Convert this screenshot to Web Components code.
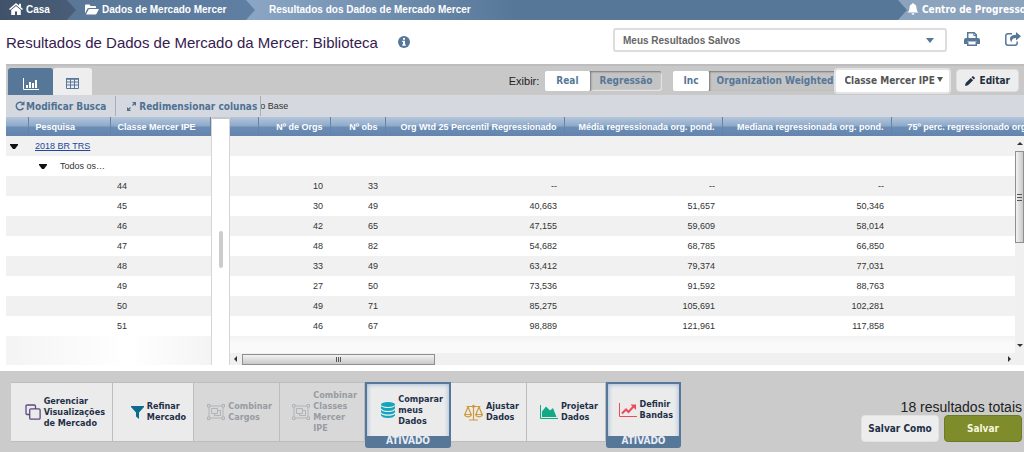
<!DOCTYPE html>
<html lang="pt-BR">
<head>
<meta charset="utf-8">
<title>Resultados de Dados de Mercado</title>
<style>
  html { height: 100%; }
  body {
    margin: 0; min-height: 100%; background: #fff; color: #222; overflow: hidden;
    font-family: "Liberation Sans", Arial, sans-serif; font-size: 9px;
    --blue: #577799; --navy: #1f3048; --grey: #cbcbcb;
    --ui: "DejaVu Sans Condensed", "DejaVu Sans", Verdana, sans-serif;
  }
</style>
</head>
<body>
<market-app></market-app>

<script>
const ICONS = {
  home: ['0 0 14 12', '<path fill="currentColor" d="M7 0 0 6l1 1 6-5 6 5 1-1-2-1.800V.8h-2v1.700zM7 3 2.200 7v5H6V8.500h2V12h3.800V7z"/>'],
  folder: ['0 0 14 11', '<path fill="currentColor" d="M0 9.500V1.500Q0 .5 1 .5h3.500l1 1.500H10q1 0 1 1V4H4Q2.800 4 2.200 5zM1 10.500 3.300 6Q3.700 5 4.800 5H14l-2.300 4.500q-.4 1-1.500 1z"/>'],
  bell: ['0 0 12 12', '<path fill="currentColor" d="M6 0q.8 0 .8.900Q9.500 1.500 9.500 5q0 3 2 4.500H.5q2-1.500 2-4.500 0-3.500 2.700-4.100Q5.200 0 6 0zM4.500 10.200h3Q7.300 11.800 6 11.800T4.500 10.200z"/>'],
  info: ['0 0 12 12', '<circle cx="6" cy="6" r="6" fill="currentColor"/><path fill="#fff" d="M5 2h2v1.800H5zM4.200 4.700H7V8.500h.9v1.200H4.200V8.500H5V5.900h-.8z"/>'],
  print: ['0 0 16 14', '<path fill="none" stroke="currentColor" stroke-width="1.500" d="M3.700 7V.8h6.500l2.100 2V7M3.700 10v3.200h8.600V10"/><path fill="none" stroke="currentColor" stroke-width="1" d="M9.800 1v2.500h2.500"/><path fill="currentColor" d="M2 6h12q2 0 2 2v4h-3.500V9.500h-9V12H0V8q0-2 2-2z"/>'],
  share: ['0 0 16 14', '<path fill="none" stroke="currentColor" stroke-width="1.500" d="M7 1.800H3Q.8 1.800.8 4v7Q.8 13.200 3 13.200h7q2.200 0 2.200-2.200V9.500"/><path fill="currentColor" d="M11 0l5 4.200-5 4.200V6Q6.500 5.800 6.500 10.500 4 7.500 5.500 4.800 7 2.700 11 2.700z"/>'],
  bars: ['0 0 16 12', '<path fill="none" stroke="currentColor" d="M.5 0v11.500H16"/><path fill="currentColor" d="M3 7h2v3H3zM6 4h2v6H6zM9 5h2v5H9zM12 2h2v8h-2z"/>'],
  table: ['0 0 13 11', '<path fill="none" stroke="currentColor" d="M.5 1h12v9.500H.5zM.5 4h12M.5 7h12M4.500 1v9.500M8.500 1v9.500"/><path fill="currentColor" d="M0 0h13v1.500H0z"/>'],
  redo: ['0 0 10 10', '<path fill="none" stroke="currentColor" stroke-width="1.500" d="M8.300 7A3.800 3.800 0 1 1 7.800 2.400"/><path fill="currentColor" d="M9.500 0v4.300H5.300z"/>'],
  expand: ['0 0 9 9', '<path stroke="currentColor" stroke-width="1.300" d="M1.500 7.500l2-2M5.500 3.500l2-2"/><path fill="currentColor" d="M5 0h4v4zM0 5v4h4z"/>'],
  pencil: ['0 0 10 10', '<path fill="currentColor" d="M0 10l.7-3L5.800 1.900l2.300 2.300L3 9.300zM6.500 1.200 7.300.4q.6-.6 1.200 0l1.100 1.100q.6.600 0 1.200l-.8.800z"/>'],
  caret: ['0 0 8 5', '<path fill="currentColor" d="M0 0h8L4 5z"/>'],
  drop: ['0 0 6 5', '<path fill="currentColor" d="M0 0h6L3 5z"/>'],
  node: ['0 0 8 5', '<path fill="currentColor" d="M0 0h8v1L5 5H3L0 1z"/>'],
  copy: ['0 0 16 16', '<path fill="none" stroke="#5b4a80" stroke-width="1.300" d="M4.700 10.500H2.200Q1 10.500 1 9.300V2.200Q1 1 2.200 1h7.100q1.200 0 1.200 1.200v2.500M5.900 4.900h8q1.200 0 1.200 1.200v7.800q0 1.200-1.200 1.200h-8q-1.200 0-1.200-1.200V6.100q0-1.200 1.200-1.200z"/>'],
  funnel: ['0 0 13 13', '<path fill="#0b6c92" d="M0 0h13v1L8 6.500V13L5 10.500v-4L0 1z"/>'],
  group: ['0 0 18 16', '<g fill="none" stroke="#b0b4b8"><path d="M2 2h14v12H2z"/><path fill="#d8d8d8" d="M.5.5h2.500v2.500H.5zM15 .5h2.500v2.500H15zM.5 13h2.500v2.500H.5zM15 13h2.500v2.500H15z"/><path d="M4.500 4.500h6v5h-6z"/><path d="M10.500 6.500h3v5h-6v-2"/></g>'],
  db: ['0 0 14 16', '<g fill="#12a5bd"><ellipse cx="7" cy="2.500" rx="7" ry="2.500"/><path d="M0 4q2 2 7 2t7-2v2.500Q12 9 7 9T0 6.500zM0 8q2 2 7 2t7-2v2.300q-2 2.200-7 2.200t-7-2.200zM0 11.800q2 2 7 2t7-2v1.700Q12 16 7 16T0 13.500z"/></g>'],
  scale: ['0 0 19 17', '<g fill="none" stroke="#cf9a3c" stroke-width="1.200"><path d="M9.500 1v14.500M5 16h9M2.500 2.500h14M4 3 .8 10.500M4 3l3.200 7.500M15 3l-3.200 7.500M15 3l3.200 7.500M.6 10.500h6.800q-.4 2.300-3.400 2.300T.6 10.500zM11.600 10.500h6.800q-.4 2.300-3.400 2.300t-3.400-2.300z"/></g><circle cx="9.500" cy="2.300" r="1.600" fill="#cf9a3c"/>'],
  area: ['0 0 18 14', '<path fill="none" stroke="#12aa85" d="M.5 0v13.500H18"/><path fill="#12aa85" d="M2 12V6.500L6 1.500l4 4L13 3l3.500 9z"/>'],
  line: ['0 0 18 14', '<path fill="none" stroke="#ee4b58" d="M.5 0v13.500H18"/><path fill="none" stroke="#ee4b58" stroke-width="2" d="M3 10.500l4-4 2.500 2.500 5-5.500"/><path fill="#ee4b58" d="M11.500 1.500H17V7z"/>']
};

const define = (name, html, setup) => {
  const tpl = document.createElement('template');
  tpl.innerHTML = html;
  customElements.define(name, class extends HTMLElement {
    constructor() {
      super();
      this.attachShadow({ mode: 'open' }).append(tpl.content.cloneNode(true));
    }
    connectedCallback() { if (setup) setup(this, this.shadowRoot); }
  });
};

/* Icon: its box is the size of its view box */
define('ui-icon', `<style>:host{display:block;flex:none} svg{display:block}</style>`, (el, root) => {
  const [box, body] = ICONS[el.getAttribute('name')];
  const [, , w, h] = box.split(' ');
  root.innerHTML += `<svg viewBox="${box}" width="${w}" height="${h}" aria-hidden="true">${body}</svg>`;
});

/* Breadcrumb */
define('crumb-item', `
<style>
  :host { display: block; height: 20px; background: var(--edge); }
  a { display: flex; align-items: center; gap: 3px; height: 100%; box-sizing: border-box; padding: 0 20px 2px 9px;
      color: #fff; font-weight: bold; font-size: 10px; text-decoration: none; white-space: nowrap;
      background: var(--fill); clip-path: polygon(0 0, calc(100% - 9px) 0, 100% 50%, calc(100% - 9px) 100%, 0 100%); }
  :host([last]) { flex: 1; }
  :host([last]) a { padding-left: 14px; }
</style>
<a href="#"><slot></slot></a>`);

define('crumb-bar', `
<style>
  :host { display: block; }
  nav { display: flex; height: 20px; overflow: hidden; background: #8ba3bd; }
  crumb-item:nth-of-type(1) { --fill: linear-gradient(90deg, #3f5269, #4a5e79); --edge: #5a7797; width: 76px; }
  crumb-item:nth-of-type(2) { --fill: linear-gradient(90deg, #5a7797, #5f7fa3); --edge: #8aa5c4; width: 179px; }
  crumb-item:nth-of-type(3) { --fill: linear-gradient(90deg, #8aa5c4, #577799 40%); --edge: #8ba3bd; }
  .alerts { display: flex; align-items: center; gap: 3px; width: 117px; padding-bottom: 2px; color: #fff; text-decoration: none;
            font: bold 10px var(--ui); white-space: nowrap; }
</style>
<nav aria-label="Trilha">
  <crumb-item><ui-icon name="home"></ui-icon>Casa</crumb-item>
  <crumb-item><ui-icon name="folder"></ui-icon>Dados de Mercado Mercer</crumb-item>
  <crumb-item last>Resultados dos Dados de Mercado Mercer</crumb-item>
  <a class="alerts" href="#"><ui-icon name="bell"></ui-icon>Centro de Progresso</a>
</nav>`);

/* Page title, saved results and page actions */
define('title-bar', `
<style>
  :host { display: flex; align-items: center; height: 44px; padding: 0 3px 0 6px; }
  h1 { margin: 0 20px 0 0; font-size: 15px; font-weight: normal; color: #35204f; white-space: nowrap; }
  .info { color: var(--blue); }
  .pick { display: grid; align-items: center; width: 334px; margin: 0 17px 4px auto; color: var(--blue); }
  .pick > * { grid-area: 1 / 1; }
  select { appearance: none; width: 100%; height: 24px; border: 2px solid #ddd; border-radius: 3px; background: #fff;
           padding: 0 8px; color: #666; font: bold 10px "Liberation Sans", sans-serif; box-sizing: border-box; }
  .pick ui-icon { justify-self: end; margin-right: 13px; pointer-events: none; }
  button { border: 0; padding: 0; margin-bottom: 6px; background: none; color: var(--blue); }
  button + button { margin-left: 25px; }
</style>
<h1>Resultados de Dados de Mercado da Mercer: Biblioteca</h1>
<ui-icon class="info" name="info"></ui-icon>
<div class="pick">
  <select aria-label="Resultados salvos"><option>Meus Resultados Salvos</option></select>
  <ui-icon name="caret"></ui-icon>
</div>
<button aria-label="Imprimir"><ui-icon name="print"></ui-icon></button>
<button aria-label="Compartilhar"><ui-icon name="share"></ui-icon></button>`);

/* Two-way switch */
define('seg-toggle', `
<style>
  :host { display: flex; height: 20px; }
  ::slotted(button) { border: 0; margin: 0; padding: 0 11px; background: #fff; color: var(--blue); font: bold 10px var(--ui);
                      border-radius: 2px; white-space: nowrap; }
  ::slotted(button[aria-pressed="true"]) { background: #c4c4c4; padding: 0 10px; border-radius: 0 3px 3px 0;
      box-shadow: inset 1px 1px 2px #777, inset -1px -1px 1px #eee; }
  :host([tight]) ::slotted(button) { padding: 0 10px; }
  :host([tight]) ::slotted(button[aria-pressed="true"]) { padding: 0 0 0 8px; border-radius: 0; box-shadow: inset 1px 1px 2px #777; }
</style>
<slot></slot>`);

define('view-toolbar', `
<style>
  :host { display: block; margin-left: 6px; }
  .top { display: flex; align-items: center; height: 31px; border-top: 2px solid #bdbdbd; background: #c8c8c8; padding: 0 5px 0 2px; box-sizing: border-box; }
  .tab { align-self: end; display: grid; place-items: center; height: 27px; border: 0; padding: 4px 0 0; border-radius: 3px 3px 0 0; }
  .chart { width: 45px; background: var(--blue); color: #fff; }
  .list { width: 39px; background: #eee; color: var(--blue); }
  .show { margin: 0 6px 0 auto; font-size: 11px; }
  .inc { margin-left: 11px; }
  .level { display: grid; align-items: center; width: 117px; margin-right: 5px; }
  .level > * { grid-area: 1 / 1; }
  select { appearance: none; width: 100%; height: 26px; border: 2px solid #e4e4e4; border-radius: 4px; background: #fff; color: #555;
           padding: 0 9px; font: bold 10px var(--ui); box-sizing: border-box; }
  .level ui-icon { justify-self: end; margin: 0 8px 2px 0; color: #555; pointer-events: none; }
  .edit { display: flex; align-items: center; gap: 5px; height: 23px; padding: 0 8px; border: 1px solid #ddd; border-radius: 4px;
          background: #ededed; color: #22303f; font: bold 10px var(--ui); }
  .sub { display: flex; align-items: center; height: 22px; background: #d5d9df; }
  .sub button { display: flex; align-items: center; gap: 1px; height: 20px; border: 0; border-right: 1px solid #a9afb6; background: none; color: #4f7194;
                font: bold 10px var(--ui); white-space: nowrap; padding: 0 9px; }
  .sub button + button { gap: 3px; padding: 0 3px 0 11px; }
  .base { display: flex; justify-content: end; width: 27px; overflow: hidden; white-space: nowrap; color: #333; }
</style>
<div class="top">
  <button class="tab chart" aria-label="Gráfico"><ui-icon name="bars"></ui-icon></button>
  <button class="tab list" aria-label="Tabela"><ui-icon name="table"></ui-icon></button>
  <span class="show">Exibir:</span>
  <seg-toggle><button aria-pressed="false">Real</button><button aria-pressed="true">Regressão</button></seg-toggle>
  <seg-toggle class="inc" tight><button aria-pressed="false">Inc</button><button aria-pressed="true">Organization Weighted</button></seg-toggle>
  <div class="level">
    <select aria-label="Nível"><option>Classe Mercer IPE</option></select>
    <ui-icon name="drop"></ui-icon>
  </div>
  <button class="edit"><ui-icon name="pencil"></ui-icon>Editar</button>
</div>
<div class="sub">
  <button><ui-icon name="redo"></ui-icon>Modificar Busca</button>
  <button><ui-icon name="expand"></ui-icon>Redimensionar colunas</button>
  <span class="base"><span>o Base</span></span>
</div>`);

/* Scroll bar: arrow, thumb, arrow */
define('scroll-track', `
<style>
  :host { display: flex; align-items: center; background: #f0f0f0; }
  :host([vertical]) { flex-direction: column; }
  i { flex: none; width: 0; height: 0; margin: 0 4px; border: 3px solid transparent; }
  i:first-of-type { border-right-color: #333; border-left: 0; margin-right: 5px; }
  i:last-of-type { border-left-color: #333; border-right: 0; margin-left: auto; }
  span { display: grid; place-items: center; box-sizing: border-box; width: 193px; height: 11px; border: 1px solid #8f8f8f;
         background: linear-gradient(#f2f2f2, #c9c9c9); }
  b { width: 5px; height: 5px; background: repeating-linear-gradient(90deg, #555 0 1px, transparent 1px 2px); }
  :host([vertical]) i { margin: 6px 0; border: 3px solid transparent; }
  :host([vertical]) i:first-of-type { border-bottom-color: #333; border-top: 0; }
  :host([vertical]) i:last-of-type { border-top-color: #333; border-bottom: 0; margin-top: auto; }
  :host([vertical]) span { width: 100%; height: 92px; background: linear-gradient(90deg, #f2f2f2, #c9c9c9); }
  :host([vertical]) b { background: repeating-linear-gradient(#555 0 1px, transparent 1px 3px); height: 7px; }
</style>
<i></i><span><b></b></span><i></i>`);

const TABLE_CSS = `
  table { width: 100%; border-collapse: collapse; table-layout: fixed; }
  th, td { height: 20px; padding: 0 7px; box-sizing: border-box; white-space: nowrap; line-height: 10px; }
  th { height: 19px; color: #fff; font-weight: bold; border-right: 1px solid #6583a8; }
  thead tr { background: linear-gradient(#b4c6dc, #8faac9 45%, #6b8db5 55%, #6384ac); }
  tbody tr:nth-child(odd) { background: #f1f1f1; }
  tbody tr:nth-child(even) { background: #fff; }
  td { color: #333; }`;

define('survey-tree', `
<style>
  :host { display: block; width: 205px; border-right: 1px solid #d5d5d5; background: linear-gradient(90deg, #f4f4f4, #fff 60%, #f4f4f4); }
  ${TABLE_CSS}
  th, td { text-align: left; }
  button { display: block; border: 0; padding: 0; background: none; color: #111; }
  .node { padding: 0 4px; }
  .sub { display: flex; align-items: center; gap: 13px; padding-left: 4px; }
  a { color: #23479a; }
</style>
<table>
  <colgroup><col style="width:22px"><col style="width:82px"><col></colgroup>
  <thead><tr><th></th><th>Pesquisa</th><th>Classe Mercer IPE</th></tr></thead>
  <tbody></tbody>
</table>`, (el, root) => {
  const arrow = '<button aria-label="Recolher"><ui-icon name="node"></ui-icon></button>';
  root.querySelector('tbody').innerHTML =
    `<tr><td class="node">${arrow}</td><td><a href="#">2018 BR TRS</a></td><td></td></tr>` +
    `<tr><td></td><td><div class="sub">${arrow}Todos os…</div></td><td></td></tr>` +
    [44, 45, 46, 47, 48, 49, 50, 51].map(n => `<tr><td></td><td></td><td>${n}</td></tr>`).join('');
});

define('figures-table', `
<style>
  :host { display: flex; flex-direction: column; position: relative; min-width: 0; overflow: hidden; border-left: 1px solid #d5d5d5; box-sizing: border-box; }
  ${TABLE_CSS}
  th, td { text-align: right; }
  .rest { flex: 1; background: linear-gradient(#f2f2f2, #fafafa 40%); }
  .down { position: absolute; top: 19px; right: 0; bottom: 12px; width: 9px; }
  .across { height: 12px; padding-right: 9px; }
  th:last-child { overflow: hidden; padding: 0 0 0 16px; text-align: left; border: 0; }
</style>
<table>
  <colgroup><col style="width:28px"><col style="width:72px"><col style="width:55px"><col style="width:179px"><col style="width:158px"><col style="width:169px"><col></colgroup>
  <thead><tr><th></th><th>Nº de Orgs</th><th>Nº obs</th><th>Org Wtd 25 Percentil Regressionado</th><th>Média regressionada org. pond.</th><th>Mediana regressionada org. pond.</th><th>75º perc. regressionado org</th></tr></thead>
  <tbody></tbody>
</table>
<div class="rest"></div>
<scroll-track class="across"></scroll-track>
<scroll-track class="down" vertical></scroll-track>`, (el, root) => {
  const rows = ['||||', '||||', '10|33|--|--|--', '30|49|40,663|51,657|50,346', '42|65|47,155|59,609|58,014',
    '48|82|54,682|68,785|66,850', '33|49|63,412|79,374|77,031', '27|50|73,536|91,592|88,763',
    '49|71|85,275|105,691|102,281', '46|67|98,889|121,961|117,858'];
  root.querySelector('tbody').innerHTML = rows.map(r =>
    `<tr><td></td>${r.split('|').map(c => `<td>${c}</td>`).join('')}<td></td></tr>`).join('');
});

define('results-grid', `
<style>
  :host { display: grid; grid-template-columns: auto 17px minmax(0, 1fr); min-height: 248px; padding-left: 6px; }
  .split { display: grid; place-items: center; border-top: 2px solid #c4c8cc; }
  .split i { width: 4px; height: 37px; border-radius: 2px; background: #ccc; margin-top: 14px; }
</style>
<survey-tree></survey-tree><div class="split"><i></i></div><figures-table></figures-table>`);

/* Tool tile; the active state adds a caption under it */
define('tool-tile', `
<style>
  :host { display: flex; flex-direction: column; box-sizing: border-box; height: 60px; border: 1px solid #bdbdbd; border-left: 0; background: #ebebeb; }
  button { flex: 1; display: flex; align-items: center; justify-content: flex-end; gap: 3px; border: 0; margin: 0; padding: 0 7px 0 0; background: none; text-align: left;
           color: var(--navy); font: bold 9px/11px var(--ui); }
  .on { display: none; }
  :host([off]) { background: #d8d8d8; }
  :host([off]) button { color: #979ca3; }
  :host([active]) { height: 66px; border: 2px solid var(--blue); border-radius: 0 0 3px 3px; box-shadow: inset 0 0 5px #8fb0d8; }
  :host([active]) .on { display: block; background: var(--blue); color: #e8eef5; text-align: center; font: bold 10px/10px var(--ui); }
  :host([active]) button { padding-right: 6px; }
</style>
<button><slot name="icon"></slot><span><slot></slot></span></button>
<div class="on">ATIVADO</div>`);

define('tool-bar', `
<style>
  :host { display: flex; align-items: flex-start; margin-top: 6px; min-height: 81px; padding: 11px 2px 0 11px; box-sizing: border-box; background: var(--grey); }
  .end { margin-left: auto; display: flex; flex-direction: column; align-items: flex-end; padding-top: 18px; gap: 1px; }
  output { font-size: 14px; line-height: 14px; color: #222; }
  .row { display: flex; gap: 5px; }
  .row button { width: 78px; height: 27px; padding: 0; border: 1px solid #e2e2e2; border-radius: 4px; background: #ededed; color: var(--navy); font: bold 10px var(--ui); white-space: nowrap; }
  .row .save { background: #7f8c2b; border-color: #6e7b25; color: #f4f6dd; }
</style>
<tool-tile style="width:102px"><ui-icon slot="icon" name="copy"></ui-icon>Gerenciar<br>Visualizações<br>de Mercado</tool-tile>
<tool-tile style="width:81px"><ui-icon slot="icon" name="funnel"></ui-icon>Refinar<br>Mercado</tool-tile>
<tool-tile style="width:86px" off><ui-icon slot="icon" name="group"></ui-icon>Combinar<br>Cargos</tool-tile>
<tool-tile style="width:85px" off><ui-icon slot="icon" name="group"></ui-icon>Combinar<br>Classes<br>Mercer<br>IPE</tool-tile>
<tool-tile style="width:86px" active><ui-icon slot="icon" name="db"></ui-icon>Comparar<br>meus<br>Dados</tool-tile>
<tool-tile style="width:76px"><ui-icon slot="icon" name="scale"></ui-icon>Ajustar<br>Dados</tool-tile>
<tool-tile style="width:79px"><ui-icon slot="icon" name="area"></ui-icon>Projetar<br>Dados</tool-tile>
<tool-tile style="width:75px" active><ui-icon slot="icon" name="line"></ui-icon>Definir<br>Bandas</tool-tile>
<div class="end">
  <output>18 resultados totais</output>
  <div class="row"><button>Salvar Como</button><button class="save">Salvar</button></div>
</div>`);

define('market-app', `
<style>:host { display: flex; flex-direction: column; }</style>
<crumb-bar></crumb-bar>
<title-bar></title-bar>
<view-toolbar></view-toolbar>
<results-grid></results-grid>
<tool-bar></tool-bar>`);
</script>
</body>
</html>
